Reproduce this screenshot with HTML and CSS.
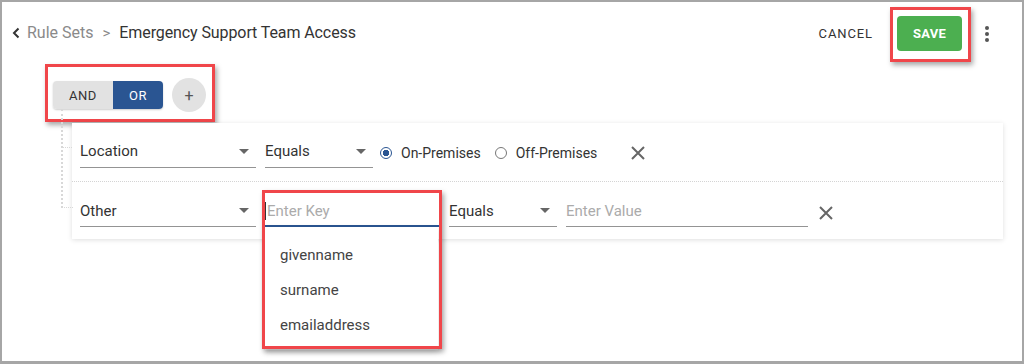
FILE: index.html
```html
<!DOCTYPE html>
<html lang="en">
<head>
    <meta charset="UTF-8">
    <title>Emergency Support Team Access</title>
    <link rel="stylesheet" href="styles.css">
</head>
<body>
    <div class="frame">
        <header class="topbar">
            <nav class="crumbs">
                <svg class="back" width="8" height="12" viewBox="0 0 8 12"><path d="M6.5 1.5 2 6l4.5 4.5" fill="none" stroke="#333" stroke-width="2"/></svg>
                <span class="crumb-link">Rule Sets</span>
                <span class="crumb-sep">&gt;</span>
                <span class="crumb-current">Emergency Support Team Access</span>
            </nav>
            <div class="actions">
                <button class="btn-text">CANCEL</button>
                <div class="mark mark-save">
                    <button class="btn-save">SAVE</button>
                </div>
                <button class="kebab"><span></span><span></span><span></span></button>
            </div>
        </header>

        <div class="mark mark-group">
            <div class="toggle">
                <span class="seg">AND</span>
                <span class="seg active">OR</span>
            </div>
            <button class="add">+</button>
        </div>

        <div class="rules">
            <div class="rule">
                <div class="field w-attr"><span>Location</span><i class="caret-down"></i></div>
                <div class="field w-op"><span>Equals</span><i class="caret-down"></i></div>
                <div class="radios">
                    <label class="radio on"><i></i>On-Premises</label>
                    <label class="radio"><i></i>Off-Premises</label>
                </div>
                <svg class="remove x1" width="16" height="16" viewBox="0 0 16 16"><path d="M2 2l12 12M14 2 2 14" stroke="#666" stroke-width="2"/></svg>
            </div>
            <div class="rule">
                <div class="field w-attr"><span>Other</span><i class="caret-down"></i></div>
                <div class="key-cell">
                    <div class="field w-key focused"><span class="cursor"></span><span class="placeholder">Enter Key</span></div>
                    <ul class="menu">
                        <li>givenname</li>
                        <li>surname</li>
                        <li>emailaddress</li>
                    </ul>
                    <div class="mark mark-key"></div>
                </div>
                <div class="field w-op"><span>Equals</span><i class="caret-down"></i></div>
                <div class="field w-value"><span class="placeholder">Enter Value</span></div>
                <svg class="remove" width="16" height="16" viewBox="0 0 16 16"><path d="M2 2l12 12M14 2 2 14" stroke="#666" stroke-width="2"/></svg>
            </div>
        </div>
    </div>
</body>
</html>
```

FILE: styles.css
```css
body {
    margin: 0;
    font-family: Roboto, "Liberation Sans", sans-serif;
    color: #333;
}

.frame {
    width: 1024px;
    height: 364px;
    box-sizing: border-box;
    border: 2px solid #a6a6a6;
    border-bottom-width: 3px;
    background: #fff;
    overflow: hidden;
}

/* annotation boxes */
.mark {
    border: 3px solid #f0464a;
    box-shadow: 2px 3px 5px rgba(0, 0, 0, 0.35);
    box-sizing: border-box;
}

.topbar {
    display: flex;
    align-items: center;
    justify-content: space-between;
    padding: 5px 25px 0 10px;
}

.crumbs {
    display: flex;
    align-items: center;
    font-size: 16px;
    margin-bottom: 4px;
}

.back {
    margin-right: 7px;
}

.crumb-link {
    color: #8a8a8a;
}

.crumb-sep {
    color: #8a8a8a;
    margin: 0 9px;
    font-size: 15px;
}

.crumb-current {
    color: #333;
    letter-spacing: -0.1px;
}

.actions {
    display: flex;
    align-items: center;
}

button {
    font-family: inherit;
    border: none;
    background: none;
    cursor: pointer;
    padding: 0;
}

.btn-text {
    font-size: 13px;
    font-weight: 400;
    letter-spacing: 0.9px;
    color: #333;
    margin: 0 17px 3px 0;
}

.mark-save {
    padding: 6px 6px 8px 4px;
}

.btn-save {
    width: 65px;
    height: 35px;
    border-radius: 4px;
    background: #4caf50;
    color: #fff;
    font-size: 13px;
    font-weight: 700;
    letter-spacing: 0.3px;
}

.kebab {
    width: 20px;
    height: 20px;
    margin: 0 0 2px 6px;
    display: flex;
    flex-direction: column;
    align-items: center;
    justify-content: center;
    gap: 2px;
}

.kebab span {
    width: 4px;
    height: 4px;
    border-radius: 50%;
    background: #555;
}

.mark-group {
    display: flex;
    align-items: center;
    width: 170px;
    height: 58px;
    margin: 2px 0 0 43px;
    padding: 11px 6px 7px 5px;
}

.toggle {
    display: flex;
    height: 28px;
    border-radius: 4px;
    overflow: hidden;
    box-shadow: 0 1px 2px rgba(0, 0, 0, 0.2);
}

.seg {
    display: flex;
    align-items: center;
    justify-content: center;
    width: 60px;
    background: #e2e2e2;
    font-size: 13px;
    font-weight: 400;
    letter-spacing: 0.5px;
    color: #333;
}

.seg.active {
    width: 50px;
    background: #2a5592;
    color: #fff;
}

.add {
    width: 34px;
    height: 34px;
    border-radius: 50%;
    background: #e2e2e2;
    margin-left: 9px;
    font-size: 16px;
    color: #555;
}

.rules {
    position: relative;
    width: 931px;
    margin: 1px 0 0 70px;
    background: #fff;
    box-shadow: 0 1px 5px rgba(0, 0, 0, 0.13);
}

.rules::before {
    content: "";
    position: absolute;
    left: -11px;
    top: -14px;
    width: 10px;
    height: 98px;
    border-left: 2px dotted #d8d8d8;
    border-bottom: 1px dotted #d8d8d8;
}

.rules::after {
    content: "";
    position: absolute;
    left: -9px;
    top: 24px;
    width: 9px;
    border-top: 1px dotted #d8d8d8;
}

.rule {
    display: flex;
    align-items: center;
    gap: 9px;
    height: 58px;
    box-sizing: border-box;
    padding: 2px 8px 0;
}

.rule + .rule {
    border-top: 1px dotted #d4d4d4;
    padding-top: 4px;
}

.field {
    display: flex;
    align-items: center;
    justify-content: space-between;
    box-sizing: border-box;
    height: 29px;
    padding: 0 7px 3px 0;
    border-bottom: 1px solid #949494;
    font-size: 15px;
    color: #333;
}

.w-attr { width: 176px; }
.w-op { width: 108px; }
.w-key { width: 175px; }
.w-value { width: 242px; }

.caret-down {
    width: 0;
    height: 0;
    border-left: 5px solid transparent;
    border-right: 5px solid transparent;
    border-top: 5px solid #666;
}

.placeholder {
    color: #ababab;
}

.field.focused {
    justify-content: flex-start;
    border-bottom: 2px solid #2a5592;
    padding-bottom: 2px;
}

.cursor {
    width: 1px;
    height: 18px;
    background: #333;
    margin-right: 1px;
}

.key-cell {
    position: relative;
}

.menu {
    position: absolute;
    top: 100%;
    left: 0;
    width: 173px;
    margin: 0;
    padding: 11px 0 7px;
    list-style: none;
    background: #fff;
    box-shadow: 0 2px 6px rgba(0, 0, 0, 0.15);
}

.menu li {
    height: 35px;
    line-height: 35px;
    padding-left: 15px;
    font-size: 15px;
    color: #444;
}

.mark-key {
    position: absolute;
    left: -3px;
    right: -2px;
    top: -8px;
    height: 159px;
}

.radios {
    display: flex;
    align-items: center;
    gap: 14px;
    margin-left: -2px;
}

.radio {
    display: flex;
    align-items: center;
    gap: 9px;
    font-size: 14px;
    color: #333;
}

.radio i {
    width: 12px;
    height: 12px;
    box-sizing: border-box;
    border: 1.5px solid #777;
    border-radius: 50%;
}

.radio.on i {
    border-color: #2a5592;
    background: radial-gradient(circle, #2a5592 0 3px, #fff 3.5px);
}

.remove {
    margin-left: 1px;
}

.remove.x1 {
    margin-left: 24px;
}
```
